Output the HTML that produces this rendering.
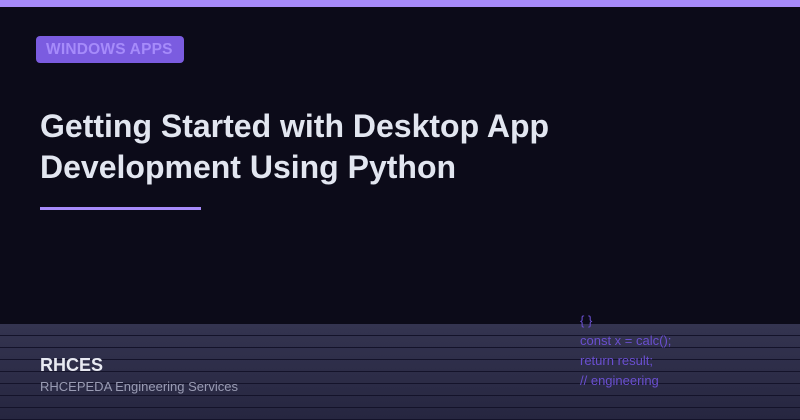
<!DOCTYPE html>
<html><head><meta charset="utf-8"><style>
*{margin:0;padding:0;box-sizing:border-box}
body{width:800px;height:420px;background:#0c0b19;position:relative;overflow:hidden;font-family:"Liberation Sans",sans-serif}
.top{position:absolute;left:0;top:0;width:800px;height:7px;background:#a78bfa}
.badge{position:absolute;left:36px;top:36px;width:148px;height:27px;background:#7b5ce0;border-radius:4px;color:#a68bfa;font-weight:bold;font-size:15.5px;line-height:28px;padding-left:10px;letter-spacing:0.2px}
h1{position:absolute;left:40px;top:106px;font-size:32px;line-height:41px;color:#e2e6f0;font-weight:bold}
.ul{position:absolute;left:40px;top:207px;width:161px;height:3px;background:#a78bfa}
.bot{position:absolute;left:0;top:324px;width:800px;height:96px;background:linear-gradient(#343450,#262640)}
.line{position:absolute;left:0;width:800px;height:1px;background:#14132a}
.code{position:absolute;left:580px;top:311px;color:#6a4fd0;font-size:13px;line-height:20px}
.name{position:absolute;left:40px;top:355px;color:#e8eaf2;font-weight:bold;font-size:18px}
.sub{position:absolute;left:40px;top:379px;color:#9a9cb4;font-size:13px}
</style></head><body>
<div class="top"></div>
<div class="badge">WINDOWS APPS</div>
<h1>Getting Started with Desktop App<br>Development Using Python</h1>
<div class="ul"></div>
<div class="bot"></div>
<div class="line" style="top:335px"></div>
<div class="line" style="top:347px"></div>
<div class="line" style="top:359px"></div>
<div class="line" style="top:371px"></div>
<div class="line" style="top:383px"></div>
<div class="line" style="top:395px"></div>
<div class="line" style="top:407px"></div>
<div class="line" style="top:419px"></div>
<div class="code">{ }<br>const x = calc();<br>return result;<br>// engineering</div>
<div class="name">RHCES</div>
<div class="sub">RHCEPEDA Engineering Services</div>
</body></html>
